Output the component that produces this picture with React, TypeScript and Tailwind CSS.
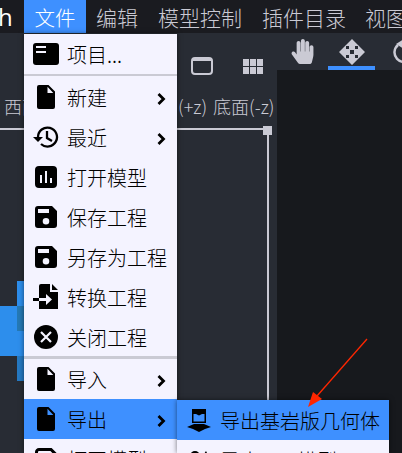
import React from 'react';
import { FaHandPaper } from 'react-icons/fa';

const SaveIcon = () => (
  <svg width="22" height="22" viewBox="0 0 22 22"><path fillRule="evenodd" d="M3 0h14l5 5v14a3 3 0 0 1-3 3H3a3 3 0 0 1-3-3V3a3 3 0 0 1 3-3ZM3 3v4h11V3ZM11 12a3.3 3.3 0 1 0 0 6.6 3.3 3.3 0 0 0 0-6.6Z" fill="currentColor" /></svg>
);
const SaveAsIcon = () => (
  <svg width="22" height="22" viewBox="0 0 22 22"><path d="M16 1.5H4A2.5 2.5 0 0 0 1.5 4v14A2.5 2.5 0 0 0 4 20.5h14a2.5 2.5 0 0 0 2.500-2.500V6Z" fill="none" stroke="currentColor" strokeWidth="3" /></svg>
);
const ProjectIcon = () => (
  <svg width="26" height="22" viewBox="0 0 26 22"><rect width="26" height="22" rx="3" fill="currentColor" /><path d="M3 4h10M3 9h10" stroke="#f4f3ff" strokeWidth="2" /></svg>
);
const ChartIcon = () => (
  <svg width="22" height="22" viewBox="0 0 22 22"><rect width="22" height="22" rx="4" fill="currentColor" /><path d="M6 9v8M11 5v12M16 12v5" stroke="#f4f3ff" strokeWidth="2" /></svg>
);
const ConvertIcon = () => (
  <svg width="26" height="26" viewBox="0 0 26 26"><path d="M6 2a2 2 0 0 1 2-2h9v8h8v17H6ZM19 0l6 6h-6ZM0 14h6v3H0Z" fill="currentColor" /><path d="M6 14h7v-4l6 5.500-6 5.500v-4H6Z" fill="#f4f3ff" /></svg>
);
const CloseIcon = () => (
  <svg width="24" height="24" viewBox="0 0 24 24"><circle cx="12" cy="12" r="12" fill="currentColor" /><path d="m7 7 10 10M17 7 7 17" stroke="#f4f3ff" strokeWidth="2.2" /></svg>
);
const BedrockIcon = () => (
  <svg width="24" height="24" viewBox="0 0 24 24"><path fillRule="evenodd" d="M5 1h14v14H5ZM6.500 6v7.500h11V6H15l-3 1.500L9 6Z" fill="currentColor" /><path d="m0 19 7-3h10l7 3-6 2-6 3-6-3Z" fill="currentColor" /></svg>
);
const ObjIcon = () => (
  <svg width="24" height="24" viewBox="0 0 24 24"><circle cx="8" cy="8" r="5" fill="currentColor" /><path d="M19 3 15 9v9h7V9Z" fill="currentColor" /></svg>
);
const HistoryIcon = () => (
  <svg width="26" height="22" viewBox="0 0 26 22"><path d="M5 11a9.500 9.500 0 1 1 3 7M14 5v7l5 3" fill="none" stroke="currentColor" strokeWidth="2.300" /><path d="M0 11h10l-5 5Z" fill="currentColor" /></svg>
);
const FileIcon = () => (
  <svg width="18" height="24" viewBox="0 0 18 24"><path fillRule="evenodd" d="M2 0h9.500L18 6.500V22a2 2 0 0 1-2 2H2a2 2 0 0 1-2-2V2a2 2 0 0 1 2-2ZM10.500 1.800V8h5.800Z" fill="currentColor" /></svg>
);
const MoveIcon = () => (
  <svg width="26" height="26" viewBox="0 0 26 26"><path d="m13 0 7 7h-4v4h-6V7H6ZM13 26l-7-7h4v-4h6v4h4ZM0 13l7-7v4h4v6H7v4ZM26 13l-7 7v-4h-4v-6h4V6Z" fill="currentColor" /></svg>
);
const RotateIcon = () => (
  <svg width="26" height="26" viewBox="0 0 26 26"><path d="M7 6a9.500 9.500 0 1 0 12 0" fill="none" stroke="currentColor" strokeWidth="2.500" /><path d="m5 5 8-5v10Z" fill="currentColor" /></svg>
);
const GridIcon = () => (
  <svg className="ml-[30px]" width="20" height="15" viewBox="0 0 20 15"><path d="M0 0h6v7H0ZM7 0h6v7H7ZM14 0h6v7h-6ZM0 8h6v7H0ZM7 8h6v7H7ZM14 8h6v7h-6Z" fill="currentColor" /></svg>
);
const Chevron = () => (
  <svg className="ml-auto mr-[11px] mt-[3px]" width="9" height="14" viewBox="0 0 9 14"><path d="m1.500 2 5 5-5 5" fill="none" stroke="currentColor" strokeWidth="2.800" /></svg>
);

function Item({ icon, label, arrow, active }: { icon: React.ReactNode; label: string; arrow?: boolean; active?: boolean }) {
  return (
    <div className={`flex h-10 shrink-0 items-center whitespace-nowrap ${active ? 'bg-[#3e90ff]' : ''}`}>
      <span className="ml-2 flex w-7 shrink-0 justify-center">{icon}</span>
      <span className="ml-[7px] pt-0.5 text-[20px] font-light leading-[38px]">{label}</span>
      {arrow && <Chevron />}
    </div>
  );
}

export default function App() {
  return (
    <div className="relative flex h-[453px] w-[402px] flex-col overflow-hidden bg-[#282c34] text-[#cacad4] [font-family:'Noto_Sans_CJK_SC',sans-serif]">
      <nav className="flex h-[33px] shrink-0 items-center whitespace-nowrap bg-[#1a1b20] text-[21px] font-light">
        <span className="-ml-0.5 w-[26px] shrink-0 text-[24px] font-normal text-white [font-family:'Open_Sans',sans-serif]">h</span>
        <span className="flex h-full w-[62px] shrink-0 items-center justify-center bg-[#3e90ff] pt-0.5 text-[20.500px] text-white">文件</span>
        <span className="ml-[10px] pt-0.5">编辑</span>
        <span className="ml-5 pt-0.5">模型控制</span>
        <span className="ml-5 pt-0.5">插件目录</span>
        <span className="ml-[19px] pt-0.5">视图</span>
      </nav>
      <main className="flex min-h-0 flex-1">
        <section className="flex w-[277px] shrink-0 flex-col">
          <div className="flex h-[58px] items-center pt-2">
            <span className="ml-[191px] h-[18px] w-[22px] rounded-sm border-2 border-t-4 border-[#cacad4]" />
            <GridIcon />
          </div>
          <div className="flex h-[37px] items-start whitespace-nowrap text-[18px] font-light leading-[30px]">
            <span className="ml-1 w-[174px]">西面(-x)</span>
            <span className="w-[35px]">(+z)</span>
            <span>底面(-z)</span>
          </div>
          <div className="relative h-[325px] w-[269px] border-r-2 border-t-2 border-[#cacad4]">
            <i className="absolute -right-[5px] -top-[4px] size-[9px] bg-[#cacad4]" />
            <i className="absolute left-[17px] top-[151px] h-[100px] w-2 bg-[#2579c2]" />
            <i className="absolute left-0 top-[176px] h-[50px] w-6 bg-[#2d8eec]" />
            <i className="absolute left-[17px] top-[151px] h-[25px] w-2 bg-[#2d8eec]" />
            <i className="absolute left-[17px] top-[176px] h-[25px] w-2 bg-[#2579b5]" />
          </div>
        </section>
        <section className="flex min-w-0 flex-1 flex-col">
          <div className="flex h-[37px] shrink-0 whitespace-nowrap">
            <span className="flex w-[51px] shrink-0 items-center justify-center"><FaHandPaper size={25} /></span>
            <span className="flex w-[47px] shrink-0 items-center justify-center border-b-4 border-[#3e90ff] pt-1"><MoveIcon /></span>
            <span className="ml-4 flex shrink-0 items-center"><RotateIcon /></span>
          </div>
          <div className="flex-1 bg-[#17191d]" />
        </section>
      </main>
      <div className="absolute left-6 top-[34px] flex h-[419px] w-[153px] flex-col overflow-hidden bg-[#f4f3ff] text-black shadow-[0_0_5px_#0008]">
        <Item icon={<ProjectIcon />} label="项目..." />
        <div className="mb-px h-0.5 shrink-0 bg-[#cacad4]" />
        <Item icon={<FileIcon />} label="新建" arrow />
        <Item icon={<HistoryIcon />} label="最近" arrow />
        <Item icon={<ChartIcon />} label="打开模型" />
        <Item icon={<SaveIcon />} label="保存工程" />
        <Item icon={<SaveIcon />} label="另存为工程" />
        <Item icon={<ConvertIcon />} label="转换工程" />
        <Item icon={<CloseIcon />} label="关闭工程" />
        <div className="-mt-px h-[3px] shrink-0 bg-[#cacad4]" />
        <Item icon={<FileIcon />} label="导入" arrow />
        <Item icon={<FileIcon />} label="导出" arrow active />
        <Item icon={<SaveAsIcon />} label="打开模型" />
      </div>
      <div className="absolute left-[177px] top-[400px] h-[53px] w-[212px] overflow-hidden bg-[#f4f3ff] text-black shadow-[0_0_5px_#0008]">
        <Item icon={<BedrockIcon />} label="导出基岩版几何体" active />
        <Item icon={<ObjIcon />} label="导出OBJ模型" />
      </div>
      <svg className="absolute left-[307px] top-[338px]" width="62" height="70" viewBox="0 0 62 70"><path d="M60 1 10 58" stroke="#ff2600" strokeWidth="1.3" /><path d="m1 69 5-15 9 7Z" fill="#ff2600" /></svg>
    </div>
  );
}
